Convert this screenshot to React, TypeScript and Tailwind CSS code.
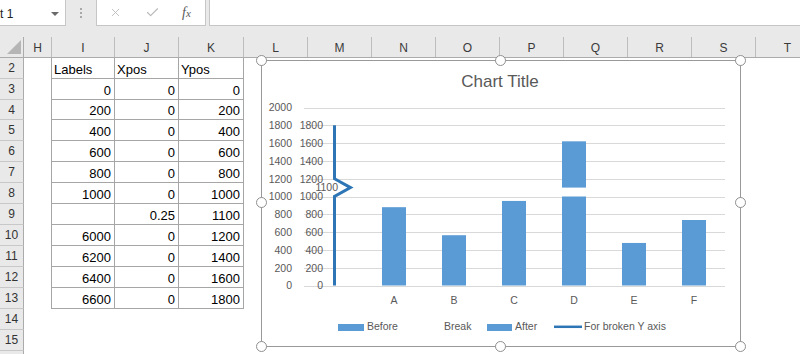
import React from 'react';
import { X, Check } from 'lucide-react';

const cols = [
  { l: 'H', w: 'w-[28px]' },
  { l: 'I', w: 'w-[63px]' },
  { l: 'J', w: 'w-[64px]' },
  { l: 'K', w: 'w-[65px]' },
  { l: 'L', w: 'w-[64px]' },
  { l: 'M', w: 'w-[64px]' },
  { l: 'N', w: 'w-[64px]' },
  { l: 'O', w: 'w-[64px]' },
  { l: 'P', w: 'w-[64px]' },
  { l: 'Q', w: 'w-[64px]' },
  { l: 'R', w: 'w-[64px]' },
  { l: 'S', w: 'w-[64px]' },
  { l: 'T', w: 'w-[64px]' },
];

const rows: { n: number | null; h: string; c?: string[] }[] = [
  { n: 2, h: 'h-[21px]', c: ['Labels', 'Xpos', 'Ypos'] },
  { n: 3, h: 'h-[21px]', c: ['0', '0', '0'] },
  { n: 4, h: 'h-[20px]', c: ['200', '0', '200'] },
  { n: 5, h: 'h-[21px]', c: ['400', '0', '400'] },
  { n: 6, h: 'h-[21px]', c: ['600', '0', '600'] },
  { n: 7, h: 'h-[21px]', c: ['800', '0', '800'] },
  { n: 8, h: 'h-[21px]', c: ['1000', '0', '1000'] },
  { n: 9, h: 'h-[21px]', c: ['', '0.25', '1100'] },
  { n: 10, h: 'h-[21px]', c: ['6000', '0', '1200'] },
  { n: 11, h: 'h-[21px]', c: ['6200', '0', '1400'] },
  { n: 12, h: 'h-[21px]', c: ['6400', '0', '1600'] },
  { n: 13, h: 'h-[21px]', c: ['6600', '0', '1800'] },
  { n: 14, h: 'h-[21px]' },
  { n: 15, h: 'h-[21px]' },
  // row 16 only peeks in at the bottom edge
  { n: null, h: 'h-[21px]' },
];

// chart geometry, page coordinates
const Y0 = 285.5;
const STEP = 17.8;
const gy = (v: number) => Y0 - (v / 200) * STEP;
const cx = (i: number) => 304 + 60 * i + 30;

const bars = [
  { c: 'A', i: 1, v: 880 },
  { c: 'B', i: 2, v: 565 },
  { c: 'C', i: 3, v: 950 },
  { c: 'D', i: 4, v: 1000, after: [1100, 1620] },
  { c: 'E', i: 5, v: 478 },
  { c: 'F', i: 6, v: 736 },
];

const FONT = 'Liberation Sans, Arial, sans-serif';

function Chart() {
  const ticks = [0, 200, 400, 600, 800, 1000, 1200, 1400, 1600, 1800, 2000];
  const inner = [0, 200, 400, 600, 800, 1000, 1200, 1400, 1600, 1800];
  const handle = 'absolute w-[11px] h-[11px] rounded-full border-[1.5px] border-[#8f8f8f] bg-white';
  return (
    <div className="absolute left-[261px] top-[60px] w-[480px] h-[287px] border border-[#999999] bg-white">
      <svg className="absolute left-0 top-0" width={478} height={285} viewBox="262 61 478 285" fontFamily={FONT}>
        <text x={500} y={87} textAnchor="middle" fontSize={17} fill="#595959">Chart Title</text>
        {ticks.map((t) => {
          const y = Math.round(gy(t)) + 0.5;
          return <line key={t} x1={304} x2={725} y1={y} y2={y} stroke="#d9d9d9" strokeWidth={1} />;
        })}
        {ticks.map((t) => (
          <text key={t} x={292} y={gy(t) + 3.8} textAnchor="end" fontSize={10.5} fill="#595959">{t}</text>
        ))}
        {inner.map((t) => (
          <text key={t} x={323} y={gy(t) + 3.8} textAnchor="end" fontSize={10.5} fill="#595959">{t}</text>
        ))}
        {bars.map((b) => (
          <g key={b.c}>
            <rect x={cx(b.i) - 12} y={gy(b.v)} width={24} height={Y0 - gy(b.v)} fill="#5b9bd5" />
            {b.after && (
              <rect x={cx(b.i) - 12} y={gy(b.after[1])} width={24} height={gy(b.after[0]) - gy(b.after[1])} fill="#5b9bd5" />
            )}
            <text x={cx(b.i)} y={304} textAnchor="middle" fontSize={10.5} fill="#595959">{b.c}</text>
          </g>
        ))}
        <polyline
          points={`334.5,${gy(1800)} 334.5,${gy(1200)} 350.5,${gy(1100)} 334.5,${gy(1000)} 334.5,${Y0}`}
          fill="none"
          stroke="#2e75b6"
          strokeWidth={3}
        />
        <text x={338} y={191} textAnchor="end" fontSize={10.5} fill="#595959">1100</text>

        {/* legend */}
        <rect x={338} y={324} width={26} height={7} fill="#5b9bd5" />
        <text x={367} y={330} fontSize={10.5} fill="#595959">Before</text>
        <text x={444} y={330} fontSize={10.5} fill="#595959">Break</text>
        <rect x={487} y={324} width={25} height={7} fill="#5b9bd5" />
        <text x={515} y={330} fontSize={10.5} fill="#595959">After</text>
        <line x1={554} x2={582} y1={326.8} y2={326.8} stroke="#2e75b6" strokeWidth={2.5} />
        <text x={584} y={330} fontSize={10.5} fill="#595959">For broken Y axis</text>
      </svg>
      <span className={`${handle} left-[-6px] top-[-6px]`} />
      <span className={`${handle} left-[233px] top-[-6px]`} />
      <span className={`${handle} right-[-6px] top-[-6px]`} />
      <span className={`${handle} left-[-6px] top-[136px]`} />
      <span className={`${handle} right-[-6px] top-[136px]`} />
      <span className={`${handle} left-[-6px] bottom-[-6px]`} />
      <span className={`${handle} left-[233px] bottom-[-6px]`} />
      <span className={`${handle} right-[-6px] bottom-[-6px]`} />
    </div>
  );
}

export default function App() {
  return (
    <div className="relative w-[800px] h-[354px] overflow-hidden bg-white font-['Liberation_Sans',Arial,sans-serif]">
      {/* formula bar */}
      <div className="flex items-start h-[37px] bg-[#e9e9e9]">
        <div className="relative w-[66px] h-[26px] bg-white border-b border-r border-[#c6c6c6] overflow-hidden flex items-center">
          <span className="ml-[-26px] mt-[3px] whitespace-nowrap text-[12px] text-[#222]">Chart 1</span>
          <span className="absolute left-[51px] top-[12px] w-0 h-0 border-l-[4px] border-r-[4px] border-t-[4px] border-l-transparent border-r-transparent border-t-[#6a6a6a]" />
        </div>
        <div className="w-[30px] flex flex-col items-center pt-[8px] gap-[2px]">
          <span className="w-[2px] h-[2px] bg-[#a8a8a8]" />
          <span className="w-[2px] h-[2px] bg-[#a8a8a8]" />
          <span className="w-[2px] h-[2px] bg-[#a8a8a8]" />
        </div>
        <div className="w-[110px] h-[26px] bg-white border-b border-x border-[#c6c6c6] flex items-center">
          <X size={13} strokeWidth={1.6} className="ml-[12px] text-[#b9b9b9]" />
          <Check size={15} strokeWidth={1.8} className="ml-[23px] text-[#b9b9b9]" />
          <span className="ml-[22px] font-['Liberation_Serif',serif] italic text-[14px] text-[#5a5a5a] leading-none">
            f<span className="text-[11px]">x</span>
          </span>
        </div>
        <div className="ml-[3px] flex-1 h-[26px] bg-white border-b border-l border-[#c6c6c6]" />
      </div>

      {/* column headers */}
      <div className="flex h-[21px] bg-[#e9e9e9] border-b border-[#ababab]">
        <div className="relative w-[24px] shrink-0 border-r border-[#ababab]">
          <svg className="absolute right-[2px] bottom-[3px]" width={14} height={14}>
            <polygon points="14,0 14,14 0,14" fill="#b5b5b5" />
          </svg>
        </div>
        {cols.map((c) => (
          <div
            key={c.l}
            className={`${c.w} shrink-0 border-r border-[#bdbdbd] flex items-center justify-center text-[12px] text-[#3a3a3a] pt-[1px]`}
          >
            {c.l}
          </div>
        ))}
      </div>

      {/* rows */}
      {rows.map((r, idx) => (
        <div key={idx} className={`flex ${r.h}`}>
          <div className="w-[24px] shrink-0 bg-[#e9e9e9] border-r border-b border-r-[#ababab] border-b-[#c8c8c8] flex items-center justify-center text-[12px] text-[#333]">
            {r.n}
          </div>
          <div className="w-[27px] shrink-0" />
          {r.c
            ? r.c.map((v, i) => (
                <div
                  key={i}
                  className={`shrink-0 border-b border-r border-[#a6a6a6] flex items-end leading-[16px] text-[13px] text-black ${
                    i === 0 ? 'w-[64px] border-l' : i === 1 ? 'w-[64px]' : 'w-[65px]'
                  } ${r.n === 2 ? 'justify-start pl-[2px]' : 'justify-end pr-[3px]'}`}
                >
                  {v}
                </div>
              ))
            : null}
        </div>
      ))}

      <Chart />
    </div>
  );
}
